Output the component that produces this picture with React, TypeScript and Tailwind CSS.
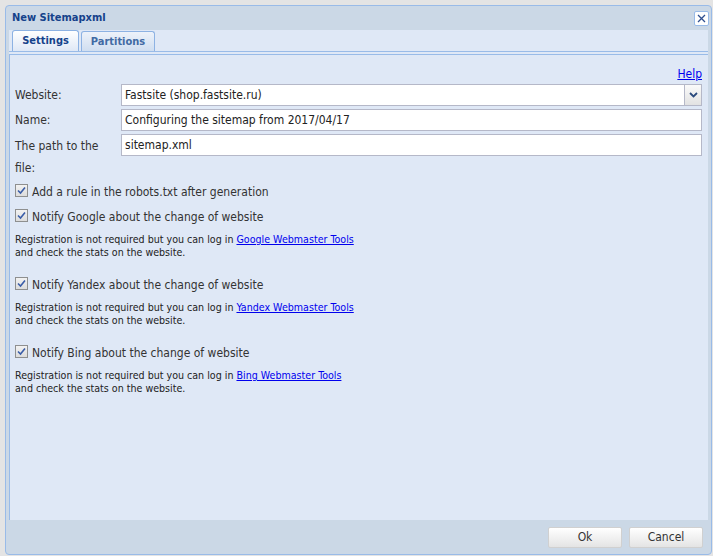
import React from 'react';

const font = { fontFamily: '"DejaVu Sans Condensed", Tahoma, "DejaVu Sans", sans-serif' };

function Check({ label }: { label: string }) {
  return (
    <div className="flex items-end gap-[4px] h-[18px]">
      <span className="w-[13px] h-[13px] border border-[#8e8f8f] bg-gradient-to-b from-[#f2f2f2] to-[#dcdcdc] flex items-center justify-center mb-[4px]">
        <svg width="9" height="9" viewBox="0 0 9 9">
          <path d="M1 4.5 L3.5 7 L8 1.5" fill="none" stroke="#3a5da8" strokeWidth="1.6" />
        </svg>
      </span>
      <span className="text-[12px] text-[#333]">{label}</span>
    </div>
  );
}

function Hint({ tool }: { tool: string }) {
  return (
    <div className="text-[10.6px] leading-[13px] text-[#222] mt-[7px]">
      Registration is not required but you can log in{' '}
      <a className="text-[#0000ee] underline">{tool}</a>
      <br />
      and check the stats on the website.
    </div>
  );
}

function Field({ value, combo }: { value: string; combo?: boolean }) {
  return (
    <div className="flex-1 h-[22px] border border-[#b5b8c8] bg-white flex items-center">
      <span className="flex-1 px-[3px] text-[12px] text-[#222]">{value}</span>
      {combo && (
        <span className="w-[17px] h-[20px] border-l border-[#b5b8c8] bg-gradient-to-b from-[#fafafa] to-[#e2e2e2] flex items-center justify-center">
          <svg width="9" height="6" viewBox="0 0 9 6">
            <path d="M1 1 L4.5 4.5 L8 1" fill="none" stroke="#2b4a7d" strokeWidth="1.8" />
          </svg>
        </span>
      )}
    </div>
  );
}

export default function App() {
  return (
    <div className="w-[713px] h-[556px] bg-[#e4e4e4] pt-[5px] pl-[5px] pr-[1px] pb-[1px]" style={font}>
      <div className="h-full border border-[#99bbe8] rounded-[4px] bg-[#cbd8e6] flex flex-col">
        <div className="h-[24px] flex items-center justify-between pl-[6px] pr-[2px]">
          <span className="text-[11px] font-bold text-[#15428b]">New Sitemapxml</span>
          <span className="w-[15px] h-[15px] border border-[#99bbe8] rounded-[2px] bg-white flex items-center justify-center">
            <svg width="9" height="9" viewBox="0 0 9 9">
              <path d="M1 1 L8 8 M8 1 L1 8" stroke="#2f4f8f" strokeWidth="1.3" />
            </svg>
          </span>
        </div>
        <div className="mx-[3px] flex-1 flex flex-col bg-[#dfe8f6]">
          <div className="h-[21px] flex items-end gap-[2px] pl-[3px]">
            <div className="h-[21px] w-[67px] border border-b-0 border-[#8db2e3] rounded-t-[3px] bg-gradient-to-b from-white to-[#dfe8f6] flex items-center justify-center pt-[1px] text-[11px] font-bold text-[#15428b]">
              Settings
            </div>
            <div className="h-[20px] w-[74px] border border-b-0 border-[#8db2e3] rounded-t-[3px] bg-gradient-to-b from-[#edf2fa] to-[#d0def0] flex items-center justify-center pt-[1px] text-[11px] font-bold text-[#416aa3]">
              Partitions
            </div>
          </div>
          <div className="h-[4px] border-t border-b border-[#99bbe8] bg-[#dfe8f6]" />
          <div className="flex-1 border-l border-[#99bbe8] pl-[5px] pr-[6px] pt-[10px]">
            <div className="flex justify-end h-[16px]">
              <a className="text-[12px] text-[#0000ee] underline">Help</a>
            </div>
            <div className="flex flex-col gap-[3px] mt-[3px]">
              <div className="flex items-center">
                <span className="w-[106px] text-[12px] text-[#333]">Website:</span>
                <Field value="Fastsite (shop.fastsite.ru)" combo />
              </div>
              <div className="flex items-center">
                <span className="w-[106px] text-[12px] text-[#333]">Name:</span>
                <Field value="Configuring the sitemap from 2017/04/17" />
              </div>
              <div className="flex items-start">
                <span className="w-[106px] text-[12px] leading-[22px] pt-[1px] text-[#333]">
                  The path to the file:
                </span>
                <Field value="sitemap.xml" />
              </div>
            </div>
            <div className="mt-[4px] flex flex-col">
              <Check label="Add a rule in the robots.txt after generation" />
              <div className="mt-[7px]">
                <Check label="Notify Google about the change of website" />
              </div>
              <Hint tool="Google Webmaster Tools" />
              <div className="mt-[17px]">
                <Check label="Notify Yandex about the change of website" />
              </div>
              <Hint tool="Yandex Webmaster Tools" />
              <div className="mt-[17px]">
                <Check label="Notify Bing about the change of website" />
              </div>
              <Hint tool="Bing Webmaster Tools" />
            </div>
          </div>
        </div>
        <div className="h-[34px] flex items-center justify-end gap-[7px] pr-[8px]">
          <button className="w-[74px] h-[21px] border border-[#d0d0d0] rounded-[2px] bg-gradient-to-b from-white to-[#e4e4e4] text-[12px] text-[#333]">
            Ok
          </button>
          <button className="w-[74px] h-[21px] border border-[#d0d0d0] rounded-[2px] bg-gradient-to-b from-white to-[#e4e4e4] text-[12px] text-[#333]">
            Cancel
          </button>
        </div>
      </div>
    </div>
  );
}
